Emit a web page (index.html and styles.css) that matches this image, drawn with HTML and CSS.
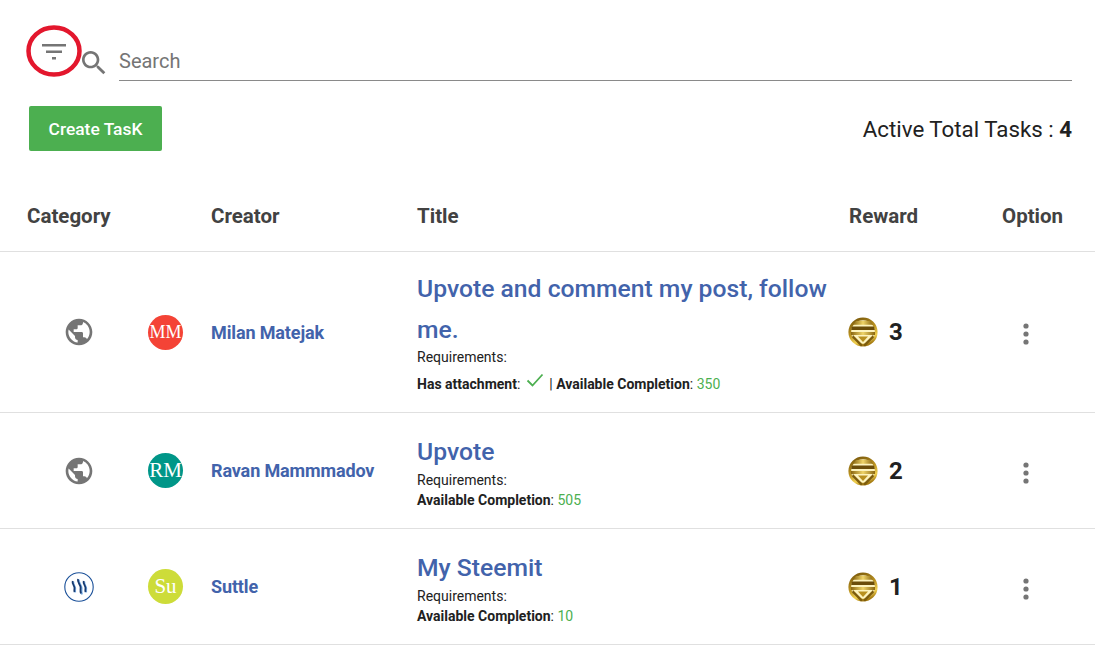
FILE: index.html
```html
<!DOCTYPE html>
<html lang="en">
<head>
<meta charset="utf-8">
<title>Tasks</title>
<link rel="stylesheet" href="styles.css">
</head>
<body>
<svg class="defs" width="0" height="0" aria-hidden="true">
  <defs>
    <linearGradient id="gold" x1="0.2" y1="0" x2="0.6" y2="1">
      <stop offset="0" stop-color="#7d5c0c"/>
      <stop offset="0.45" stop-color="#b8901f"/>
      <stop offset="0.8" stop-color="#f0d050"/>
      <stop offset="1" stop-color="#a67c12"/>
    </linearGradient>
    <linearGradient id="band" x1="0" y1="0" x2="1" y2="0">
      <stop offset="0" stop-color="#8a6610"/>
      <stop offset="0.5" stop-color="#efd468"/>
      <stop offset="1" stop-color="#8a6610"/>
    </linearGradient>
    <symbol id="globe" viewBox="0 0 24 24">
      <path fill="#757575" d="M12 2C6.48 2 2 6.48 2 12s4.48 10 10 10 10-4.48 10-10S17.52 2 12 2zm-1 17.93c-3.95-.49-7-3.85-7-7.93 0-.62.08-1.21.21-1.79L9 15v1c0 1.1.9 2 2 2v1.93zm6.9-2.54c-.26-.81-1-1.39-1.9-1.39h-1v-3c0-.55-.45-1-1-1H8v-2h2c.55 0 1-.45 1-1V7h2c1.1 0 2-.9 2-2v-.41c2.93 1.19 5 4.06 5 7.41 0 2.08-.8 3.97-2.1 5.39z"/>
    </symbol>
    <symbol id="coin" viewBox="0 0 30 30">
      <circle cx="15" cy="15" r="13.200" fill="#fdf3bd" stroke="url(#gold)" stroke-width="2.800"/>
      <path fill="url(#band)" d="M8 4h14l3 3.800H5z"/>
      <path fill="#6b4d0a" d="M4 9.500h22l.8 3.500H3.200z"/>
      <path fill="url(#band)" d="M3 15h24v3H3z"/>
      <path fill="#7d5c0c" d="M5 18 15 28l-2 1.500-9-9zM25 18 15 28l2 1.500 9-9z"/>
      <path fill="#b8901f" d="M10 19.500h10L15 25z"/>
    </symbol>
    <symbol id="dots" viewBox="0 0 6 22">
      <circle cx="3" cy="3" r="2.600" fill="#757575"/>
      <circle cx="3" cy="11" r="2.600" fill="#757575"/>
      <circle cx="3" cy="19" r="2.600" fill="#757575"/>
    </symbol>
  </defs>
</svg>

<header class="search-row">
  <div class="filter">
    <svg class="filter-icon" viewBox="0 0 24 16" aria-hidden="true"><path fill="#757575" d="M0 0h24v2.400H0zM4 6.500h16v2.400H4zM10 13h4v2.400h-4z"/></svg>
    <svg class="filter-ring" viewBox="0 0 56 52" aria-hidden="true"><ellipse cx="28" cy="26" rx="25.500" ry="23.500" fill="none" stroke="#e3172d" stroke-width="4.500"/></svg>
  </div>
  <svg class="search-icon" viewBox="0 0 24 24" aria-hidden="true"><path fill="#757575" d="M15.500 14h-.79l-.28-.27C15.410 12.590 16 11.110 16 9.500 16 5.910 13.090 3 9.500 3S3 5.910 3 9.500 5.910 16 9.500 16c1.610 0 3.090-.59 4.230-1.570l.27.28v.79l5 4.990L20.490 19l-4.990-5zm-6 0C7.010 14 5 11.990 5 9.500S7.010 5 9.500 5 14 7.010 14 9.500 11.990 14 9.500 14z"/></svg>
  <div class="search-field">Search</div>
</header>

<section class="action-row">
  <button class="create-btn" type="button">Create TasK</button>
  <div class="total">Active Total Tasks : <b>4</b></div>
</section>

<main class="task-table">
  <div class="row head">
    <div class="cat-head">Category</div>
    <div>Creator</div>
    <div>Title</div>
    <div>Reward</div>
    <div>Option</div>
  </div>

  <div class="row task tall">
    <svg class="cat-icon"><use href="#globe"/></svg>
    <div class="avatar red small-text">MM</div>
    <a class="creator">Milan Matejak</a>
    <div class="title-cell">
      <div class="task-title">Upvote and comment my post, follow me.</div>
      <div class="req">Requirements:</div>
      <div class="req meta"><b>Has attachment</b>: <svg class="check" viewBox="0 0 18 14" aria-hidden="true"><path d="M1.500 7.500l5 5L16.500 1.500" fill="none" stroke="#4caf50" stroke-width="1.800"/></svg> | <b>Available Completion</b>: <span class="num">350</span></div>
    </div>
    <div class="reward"><svg class="coin"><use href="#coin"/></svg><span>3</span></div>
    <svg class="dots"><use href="#dots"/></svg>
  </div>

  <div class="row task">
    <svg class="cat-icon"><use href="#globe"/></svg>
    <div class="avatar teal">RM</div>
    <a class="creator">Ravan Mammmadov</a>
    <div class="title-cell">
      <div class="task-title">Upvote</div>
      <div class="req">Requirements:</div>
      <div class="req"><b>Available Completion</b>: <span class="num">505</span></div>
    </div>
    <div class="reward"><svg class="coin"><use href="#coin"/></svg><span>2</span></div>
    <svg class="dots"><use href="#dots"/></svg>
  </div>

  <div class="row task">
    <svg class="cat-icon steem" viewBox="0 0 30 30" aria-hidden="true">
      <circle cx="15" cy="15" r="14.200" fill="#fff" stroke="#1a5099" stroke-width="1.100"/>
      <path d="M9.500 9.500c-1 3 2 4.500 1.800 7-.1 1.200-.4 2.200 0 4" fill="none" stroke="#7fb2e8" stroke-width="1.800"/>
      <path d="M8.700 9c-1 3 2 4.500 1.800 7-.1 1.200-.4 2.200 0 4" fill="none" stroke="#173a70" stroke-width="1.800"/>
      <path d="M15 7.500c-1 3.500 2.600 5.500 2.600 8.500 0 2-.6 3.500.4 6.500" fill="none" stroke="#7fb2e8" stroke-width="2"/>
      <path d="M14 7c-1 3.500 2.600 5.500 2.600 8.500 0 2-.6 3.500.4 6" fill="none" stroke="#173a70" stroke-width="1.800"/>
      <path d="M20.500 9.500c-1 3 2 4.500 1.800 7-.1 1.200-.4 2.200 0 4" fill="none" stroke="#7fb2e8" stroke-width="1.800"/>
      <path d="M19.700 9c-1 3 2 4.500 1.800 7-.1 1.200-.4 2.200 0 4" fill="none" stroke="#173a70" stroke-width="1.800"/>
    </svg>
    <div class="avatar lime">Su</div>
    <a class="creator">Suttle</a>
    <div class="title-cell">
      <div class="task-title">My Steemit</div>
      <div class="req">Requirements:</div>
      <div class="req"><b>Available Completion</b>: <span class="num">10</span></div>
    </div>
    <div class="reward"><svg class="coin"><use href="#coin"/></svg><span>1</span></div>
    <svg class="dots"><use href="#dots"/></svg>
  </div>
</main>
</body>
</html>
```
FILE: styles.css
```css
* { box-sizing: border-box; }
html, body { margin: 0; height: 652px; overflow: hidden; }
body { font-family: Roboto, "Liberation Sans", sans-serif; background: #fff; color: #212121; }
.defs { position: absolute; }

.search-row { display: flex; align-items: flex-end; height: 81px; padding: 0 23px 0 42px; }
.filter { position: relative; width: 24px; height: 16px; margin-bottom: 21px; }
.filter-icon { display: block; width: 24px; height: 16px; }
.filter-ring { position: absolute; left: -16px; top: -19px; width: 56px; height: 52px; }
.search-icon { width: 32px; height: 32px; margin: 0 9px 2px 12px; }
.search-field { flex: 1; height: 38px; line-height: 36px; font-size: 20px; color: #757575; border-bottom: 1px solid #8a8a8a; }

.action-row { display: flex; justify-content: space-between; align-items: center; margin-top: 25px; padding: 0 23px 0 29px; height: 45px; }
.create-btn { width: 133px; height: 45px; border: 0; border-radius: 2px; background: #4caf50; color: #fff; font: 500 17.400px Roboto, sans-serif; padding: 0; }
.total { font-size: 22.300px; color: #212121; }
.total b { font-weight: 700; }

.row { display: grid; grid-template-columns: 132px 79px 206px 431px 153px 1fr; align-items: center; border-bottom: 1px solid #e0e0e0; }
.head { height: 101px; padding-top: 30px; font-size: 20.500px; font-weight: 700; color: #424242; grid-template-columns: 211px 206px 432px 153px 1fr; }
.cat-head { padding-left: 27px; }
.task { height: 116px; }
.tall { height: 161px; }

.cat-icon { width: 32px; height: 32px; justify-self: start; margin-left: 63px; }
.cat-icon.steem { margin-left: 64px; width: 30px; height: 30px; }
.avatar { width: 35px; height: 35px; margin-left: 16px; border-radius: 50%; color: #fff; font: 21px/35px "Liberation Serif", serif; text-align: center; }
.small-text { font-size: 18px; }
.red { background: #f44336; }
.teal { background: #009688; }
.lime { background: #cddc39; }
.creator { font-size: 18px; font-weight: 700; color: #4263ab; letter-spacing: -0.130px; }

.task-title { font-size: 24.700px; font-weight: 500; line-height: 41px; color: #4263ab; margin-bottom: -2px; }
.tall .task-title { margin-bottom: -3px; }
.req { font-size: 14px; line-height: 20px; color: #212121; }
.req b { font-weight: 700; }
.meta { line-height: 24px; margin-top: 5px; }
.check { width: 18px; height: 14px; margin: 0 2px; vertical-align: 2px; }
.num { color: #4caf50; }

.reward { display: flex; align-items: center; gap: 11px; font-size: 24px; font-weight: 700; color: #212121; }
.coin { width: 30px; height: 30px; }
.dots { width: 6px; height: 22px; margin: 4px 0 0 22px; }
```
